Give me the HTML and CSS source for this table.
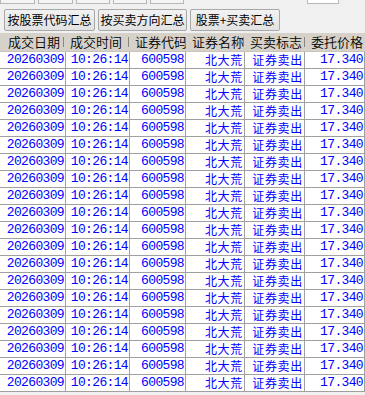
FILE: index.html
```html
<!DOCTYPE html>
<html>
<head>
<meta charset="utf-8">
<link rel="stylesheet" href="styles.css">
</head>
<body>
<div class="tabs">
  <span class="tab t1"></span><span class="tab t2"></span><span class="tab t3"></span><span class="tab t4"></span><span class="tab t5"></span><span class="tab t6"></span>
</div>
<div class="toolbar">
  <button class="btn b1">按股票代码汇总</button>
  <button class="btn b2">按买卖方向汇总</button>
  <button class="btn b3">股票+买卖汇总</button>
</div>
<div class="grid">
  <div class="head">
    <div class="hc first">成交日期</div>
    <div class="hc">成交时间</div>
    <div class="hc">证券代码</div>
    <div class="hc">证券名称</div>
    <div class="hc">买卖标志</div>
    <div class="hc last">委托价格</div>
  </div>
  <div class="rows" id="rows"></div>
</div>
<script>
  var html = '';
  for (var i = 0; i < 20; i++) {
    html += '<div class="row">' +
      '<div class="c num">20260309</div>' +
      '<div class="c num">10:26:14</div>' +
      '<div class="c num">600598</div>' +
      '<div class="c cn">北大荒</div>' +
      '<div class="c cn">证券卖出</div>' +
      '<div class="c num">17.340</div>' +
      '</div>';
  }
  document.getElementById('rows').innerHTML = html;
</script>
</body>
</html>
```
FILE: styles.css
```css
html, body {
  margin: 0;
  padding: 0;
  background: #f0f0f0;
  width: 365px;
  height: 395px;
  overflow: hidden;
  font-family: "Noto Sans CJK SC", sans-serif;
}
.tabs {
  height: 5px;
  display: flex;
  gap: 3px;
  overflow: hidden;
}
.tab {
  display: block;
  height: 3px;
  border: 1px solid #b8b8b8;
  border-top: none;
  background: #f4f4f4;
}
.t1 { width: 33px; }
.t2 { width: 33px; }
.t3 { width: 32px; }
.t4 { width: 32px; }
.t5 { width: 32px; }
.t6 { width: 30px; margin-left: 120px; background: #fff; }
.toolbar {
  display: flex;
  gap: 3px;
  padding: 4px 0 0 4px;
  height: 22px;
}
.btn {
  box-sizing: border-box;
  height: 22px;
  padding: 0;
  margin: 0;
  border: 1px solid #a8a8a8;
  border-radius: 2px;
  background: linear-gradient(#f2f2f2, #e2e2e2);
  font-family: "Noto Sans CJK SC", sans-serif;
  font-size: 12px;
  line-height: 16px;
  color: #000;
  white-space: nowrap;
  display: flex;
  align-items: center;
  justify-content: center;
}
.b1 { width: 91px; }
.b2 { width: 89px; }
.b3 { width: 90px; }
.grid {
  margin-top: 2px;
}
.head {
  display: grid;
  grid-template-columns: 64px 65px 57px 58px 61px 60px;
  height: 18px;
  background: #d6d2ca;
  border-bottom: 1px solid #c8c4bc;
}
.hc {
  font-size: 13px;
  font-weight: 350;
  line-height: 18px;
  color: #000;
  padding-left: 6px;
  position: relative;
  white-space: nowrap;
  overflow: hidden;
}
.hc.first { padding-left: 8px; }
.hc::after {
  content: "";
  position: absolute;
  right: 0;
  top: 4px;
  height: 10px;
  width: 1px;
  background: #8a8680;
  box-shadow: 1px 0 0 #fff;
}
.hc.last::after { display: none; }
.row {
  display: grid;
  grid-template-columns: 66px 64px 56px 59px 60px 60px;
  height: 17px;
  background: #fff;
}
.c {
  box-sizing: border-box;
  border-right: 1px solid #a0a0a0;
  border-bottom: 1px solid #a0a0a0;
  color: #0000ff;
  text-align: right;
  padding-right: 1px;
  white-space: nowrap;
  height: 17px;
  line-height: 16px;
  overflow: hidden;
}
.num {
  font-family: "Liberation Mono", monospace;
  font-size: 13px;
  letter-spacing: -0.65px;
}
.cn {
  font-family: "Noto Sans CJK SC", sans-serif;
  font-size: 12px;
  font-weight: 400;
  letter-spacing: 0.7px;
}
```
